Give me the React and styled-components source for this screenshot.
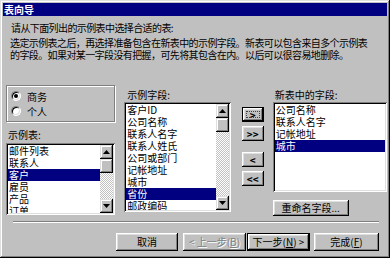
import React from 'react';
import styled, { createGlobalStyle } from 'styled-components';

const GlobalStyle = createGlobalStyle`
  html, body {
    margin: 0;
    padding: 0;
    background: #c0c0c0;
  }
  body {
    font-family: "Noto Sans CJK SC", "Liberation Sans", sans-serif;
    font-size: 10px;
    color: #000;
  }
`;

const Window = styled.div`
  width: 390px;
  height: 258px;
  box-sizing: border-box;
  padding: 3px;
  background: #c0c0c0;
  box-shadow: inset -1px -1px #000, inset 1px 1px #dfdfdf,
    inset -2px -2px #808080, inset 2px 2px #fff;
  display: flex;
  flex-direction: column;
  overflow: hidden;
`;

const TitleBar = styled.div`
  height: 13px;
  line-height: 13px;
  padding-left: 1px;
  background: #000080;
  color: #fff;
  font-weight: bold;
  font-size: 10px;
`;

const Body = styled.div`
  display: flex;
  flex-direction: column;
  padding: 0 0 0 3px;
`;

const Text = styled.div`
  line-height: 12px;
  letter-spacing: -0.6px;
  padding-left: ${p => p.$indent || 0}px;
  margin-top: ${p => p.$mt || 0}px;
  white-space: pre;
`;

const Main = styled.div`
  display: flex;
  align-items: flex-start;
  margin-top: 24px;
`;

const Column = styled.div`
  display: flex;
  flex-direction: column;
  width: ${p => p.$w}px;
  margin-left: ${p => p.$ml || 0}px;
  padding-top: ${p => p.$pt || 0}px;
`;

const GroupBox = styled.div`
  box-sizing: border-box;
  height: 37px;
  border: 1px solid #808080;
  box-shadow: inset 1px 1px #fff, 1px 1px #fff;
  padding: 4px 4px;
  display: flex;
  flex-direction: column;
  gap: 3px;
`;

const RadioRow = styled.label`
  display: flex;
  align-items: center;
  height: 12px;
  gap: 6px;
`;

const RadioDot = styled.span`
  position: relative;
  width: 10px;
  height: 10px;
  box-sizing: border-box;
  border-radius: 50%;
  background: #fff;
  border: 1px solid;
  border-color: #808080 #fff #fff #808080;
  box-shadow: inset 1px 1px #000, inset -1px -1px #dfdfdf;

  &::after {
    content: '';
    display: ${p => (p.$checked ? 'block' : 'none')};
    position: absolute;
    left: 2px;
    top: 2px;
    width: 4px;
    height: 4px;
    border-radius: 50%;
    background: #000;
  }
`;

const Label = styled.div`
  line-height: 12px;
  height: 12px;
  padding-left: ${p => p.$indent || 0}px;
  margin-top: ${p => p.$mt || 0}px;
  margin-bottom: ${p => p.$mb || 0}px;
`;

const ListBox = styled.div`
  display: flex;
  box-sizing: border-box;
  height: ${p => p.$h}px;
  padding: 2px;
  background: #fff;
  box-shadow: inset 1px 1px #808080, inset -1px -1px #fff,
    inset 2px 2px #000, inset -2px -2px #dfdfdf;
  overflow: hidden;
`;

const Items = styled.div`
  flex: 1;
  min-width: 0;
  overflow: hidden;
  display: flex;
  flex-direction: column;
`;

const Item = styled.div`
  flex: none;
  height: 12px;
  line-height: 12px;
  padding-left: 1px;
  white-space: nowrap;
  background: ${p => (p.$selected ? '#000080' : 'transparent')};
  color: ${p => (p.$selected ? '#fff' : '#000')};
`;

const ScrollBar = styled.div`
  flex: none;
  width: 13px;
  display: flex;
  flex-direction: column;
  background: repeating-conic-gradient(#c0c0c0 0% 25%, #fff 0% 50%) 0 0 / 2px 2px;
`;

const Bevel = styled.div`
  flex: none;
  box-sizing: border-box;
  width: 13px;
  height: ${p => p.$h || 13}px;
  background: #c0c0c0;
  box-shadow: inset -1px -1px #000, inset 1px 1px #dfdfdf,
    inset -2px -2px #808080, inset 2px 2px #fff;
  display: flex;
  align-items: center;
  justify-content: center;
`;

const Spacer = styled.div`
  flex: 1;
`;

const Button = styled.button`
  position: relative;
  box-sizing: border-box;
  width: ${p => p.$w}px;
  height: ${p => p.$h}px;
  margin-top: ${p => p.$mt || 0}px;
  margin-left: ${p => p.$ml || 0}px;
  padding: 0;
  font-family: "Noto Sans CJK SC", "Liberation Sans", sans-serif;
  font-size: 10px;
  line-height: 12px;
  font-weight: ${p => (p.$bold ? 'bold' : 'normal')};
  background: #c0c0c0;
  color: ${p => (p.disabled ? '#808080' : '#000')};
  text-shadow: ${p => (p.disabled ? '1px 1px #fff' : 'none')};
  border: ${p => (p.$default ? '1px solid #000' : 'none')};
  box-shadow: inset -1px -1px #000, inset 1px 1px #fff,
    inset -2px -2px #808080, inset 2px 2px #dfdfdf;
  white-space: nowrap;

  &::after {
    content: '';
    display: ${p => (p.$focus ? 'block' : 'none')};
    position: absolute;
    inset: 3px;
    border: 1px dotted #404040;
  }
`;

const Separator = styled.div`
  height: 0;
  margin: 5px 8px 0 7px;
  border-top: 1px solid #808080;
  border-bottom: 1px solid #fff;
`;

const ButtonRow = styled.div`
  display: flex;
  justify-content: flex-end;
  margin-top: 10px;
  padding-right: 8px;
`;

function Arrow({ down }) {
  return (
    <svg width="7" height="4" viewBox="0 0 7 4">
      <polygon points={down ? '0,0 7,0 3.5,4' : '0,4 7,4 3.5,0'} fill="#000" />
    </svg>
  );
}

function ScrollBarBox() {
  return (
    <ScrollBar>
      <Bevel $h={14}><Arrow /></Bevel>
      <Bevel $h={14} />
      <Spacer />
      <Bevel $h={14}><Arrow down /></Bevel>
    </ScrollBar>
  );
}

function List({ height, items, selected, scroll }) {
  return (
    <ListBox $h={height}>
      <Items>
        {items.map(it => (
          <Item key={it} $selected={it === selected}>{it}</Item>
        ))}
      </Items>
      {scroll && <ScrollBarBox />}
    </ListBox>
  );
}

const tables = ['邮件列表', '联系人', '客户', '雇员', '产品', '订单'];
const fields = ['客户ID', '公司名称', '联系人名字', '联系人姓氏', '公司或部门', '记帐地址', '城市', '省份', '邮政编码'];
const chosen = ['公司名称', '联系人名字', '记帐地址', '城市'];

export default function App() {
  return (
    <>
      <GlobalStyle />
      <Window>
        <TitleBar>表向导</TitleBar>
        <Body>
          <Text $indent={5} $mt={6}>请从下面列出的示例表中选择合适的表:</Text>
          <Text $indent={4} $mt={3}>选定示例表之后，再选择准备包含在新表中的示例字段。新表可以包含来自多个示例表</Text>
          <Text $indent={4}>的字段。如果对某一字段没有把握，可先将其包含在内。以后可以很容易地删除。</Text>

          <Main>
            <Column $w={110}>
              <GroupBox>
                <RadioRow><RadioDot $checked />商务</RadioRow>
                <RadioRow><RadioDot />个人</RadioRow>
              </GroupBox>
              <Label $indent={2} $mt={7} $mb={2}>示例表:</Label>
              <List height={72} items={tables} selected="客户" scroll />
            </Column>

            <Column $w={107} $ml={9} $pt={4}>
              <Label $indent={3} $mb={1}>示例字段:</Label>
              <List height={110} items={fields} selected="省份" scroll />
            </Column>

            <Column $w={22} $ml={11} $pt={22}>
              <Button $w={22} $h={15} $default $focus $bold>&gt;</Button>
              <Button $w={22} $h={15} $mt={4} $bold>&gt;&gt;</Button>
              <Button $w={22} $h={15} $mt={11} $bold>&lt;</Button>
              <Button $w={22} $h={15} $mt={4} $bold>&lt;&lt;</Button>
            </Column>

            <Column $w={115} $ml={9} $pt={4}>
              <Label $indent={2} $mb={1}>新表中的字段:</Label>
              <List height={90} items={chosen} selected="城市" />
              <Button $w={76} $h={16} $mt={8}>重命名字段...</Button>
            </Column>
          </Main>

          <Separator />

          <ButtonRow>
            <Button $w={62} $h={18}>取消</Button>
            <Button $w={63} $h={18} $ml={5} disabled>&lt; 上一步(<u>B</u>)</Button>
            <Button $w={63} $h={18} $ml={1} $default>下一步(<u>N</u>) &gt;</Button>
            <Button $w={65} $h={18} $ml={4}>完成(<u>F</u>)</Button>
          </ButtonRow>
        </Body>
      </Window>
    </>
  );
}
